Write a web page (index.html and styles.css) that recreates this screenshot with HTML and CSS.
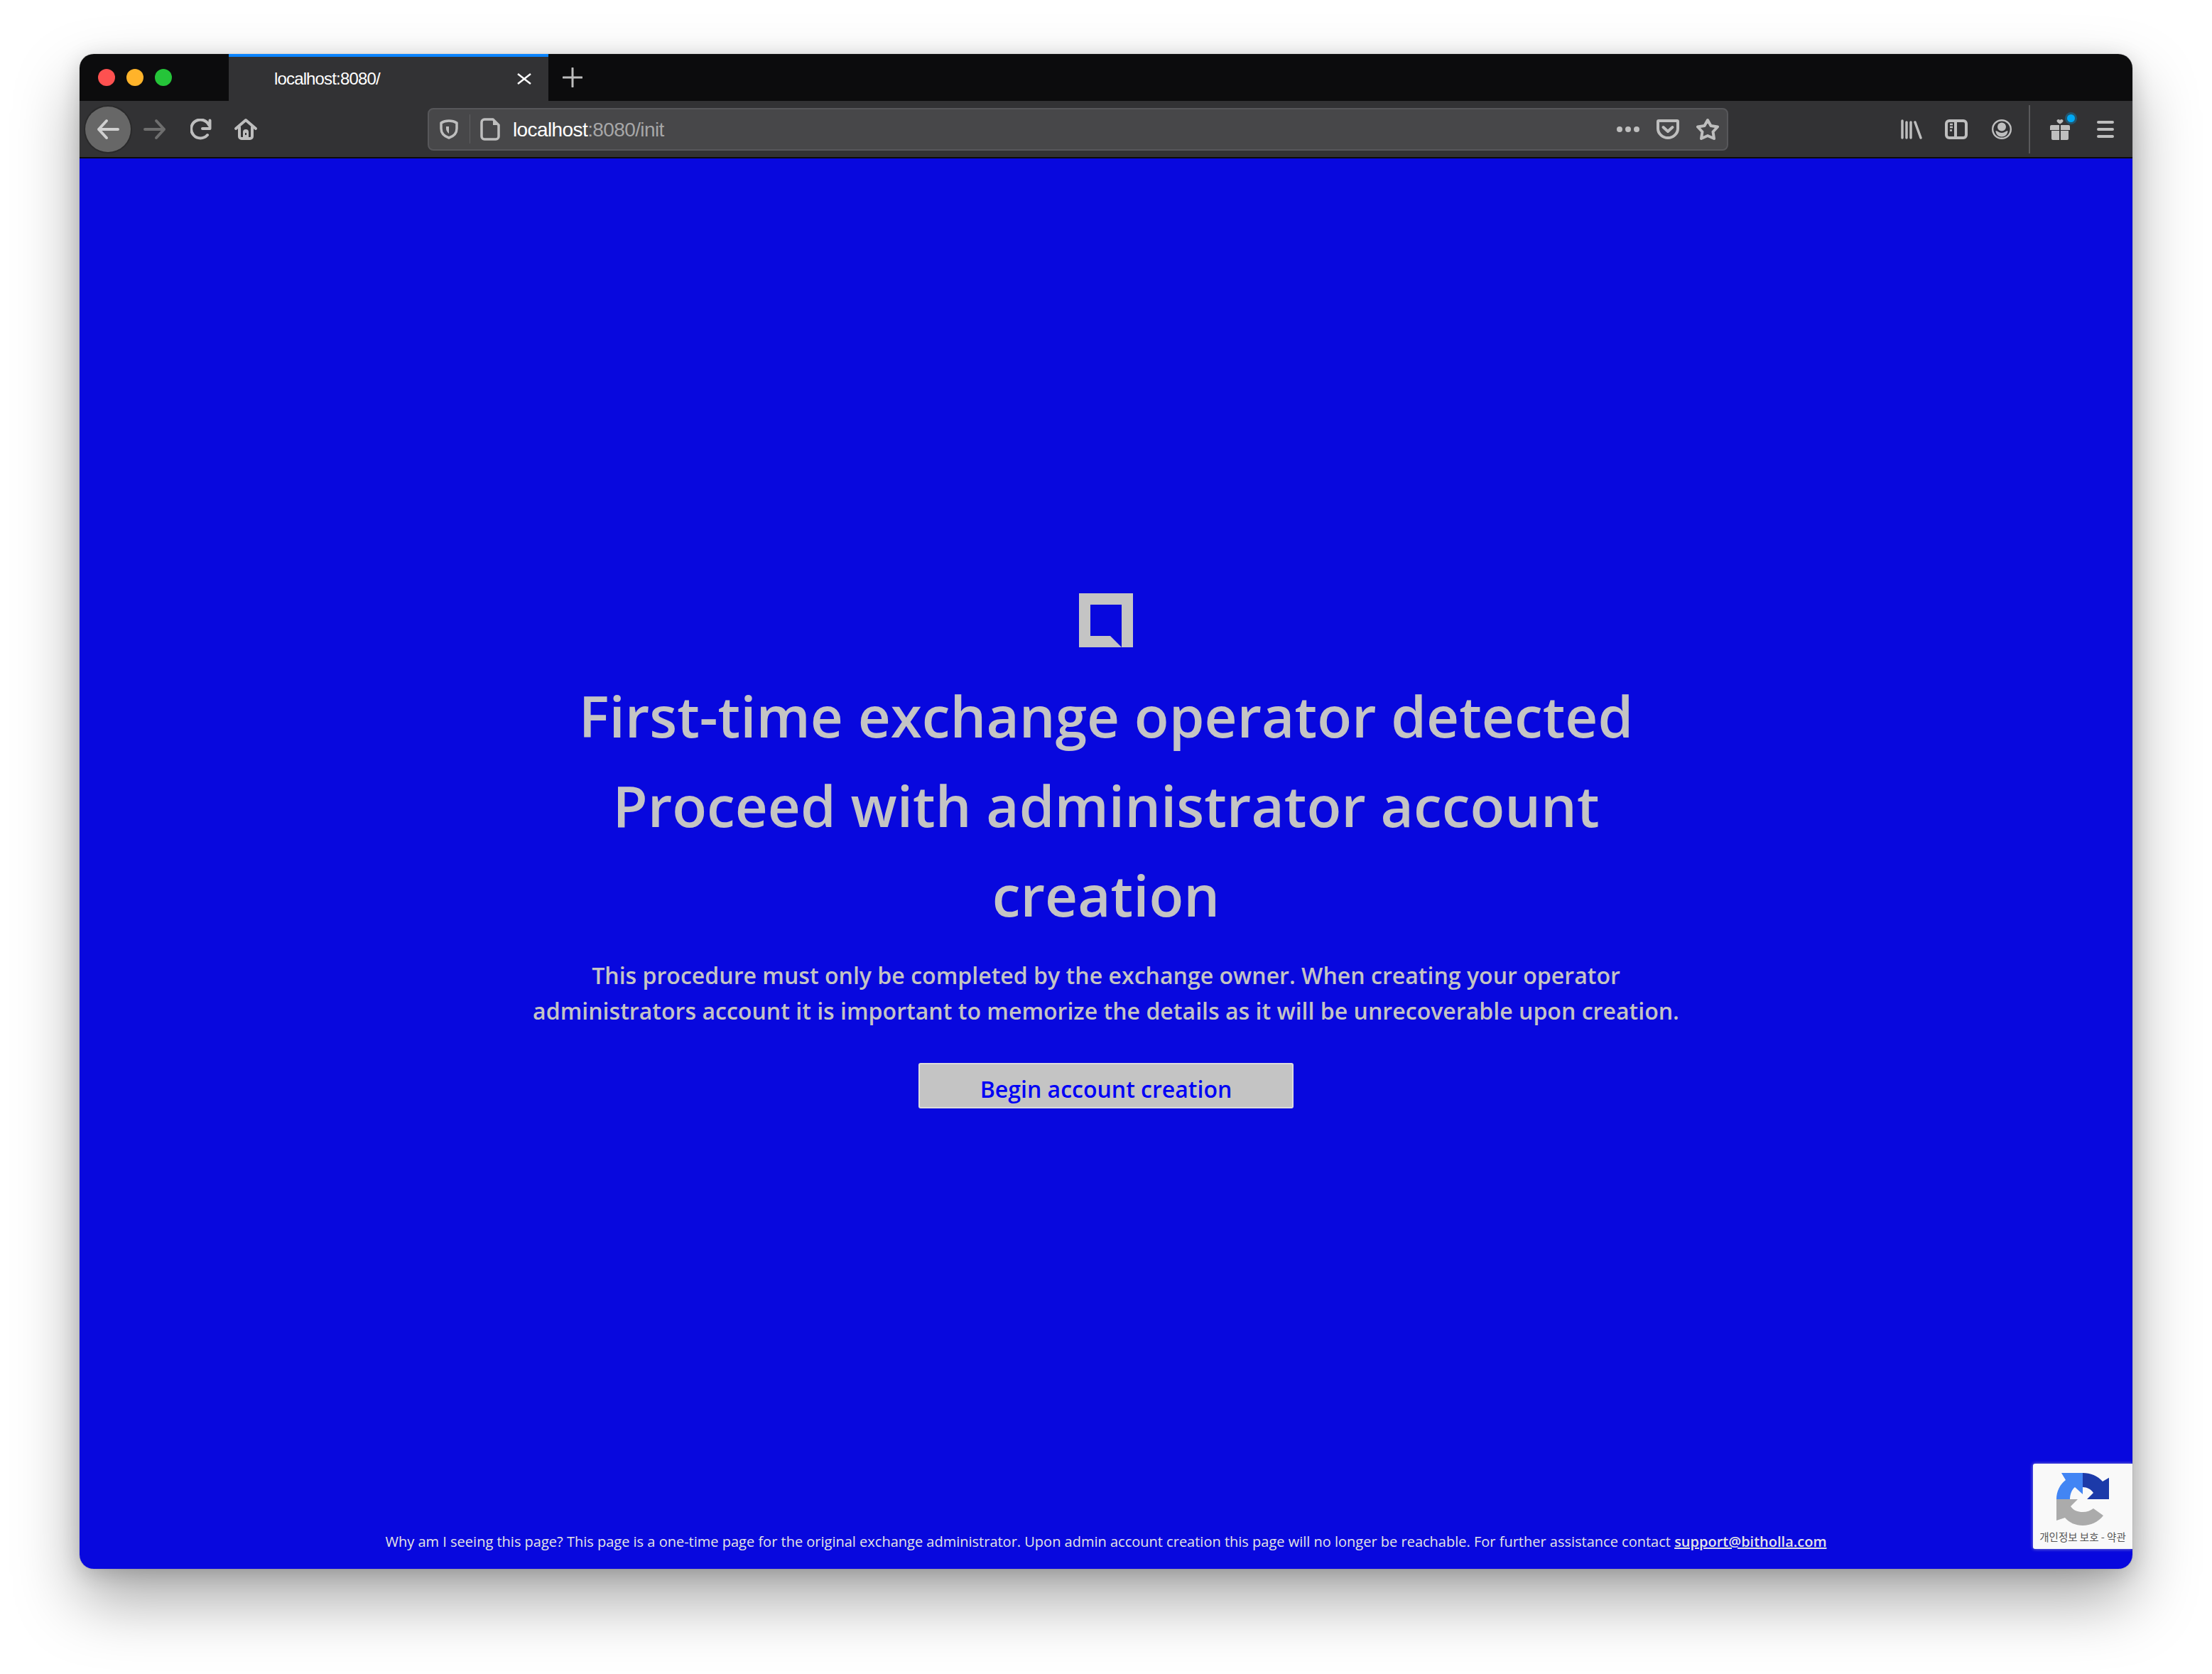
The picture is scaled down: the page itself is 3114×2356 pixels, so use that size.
FILE: index.html
```html
<!DOCTYPE html>
<html lang="en">

<head>
    <meta charset="UTF-8">
    <title>localhost:8080/</title>
    <link rel="stylesheet" href="styles.css">
</head>

<body>
    <div class="window">
        <div class="tabbar">
            <div class="lights">
                <span class="light red"></span>
                <span class="light orange"></span>
                <span class="light green"></span>
            </div>
            <div class="tab">
                <span class="tab-title">localhost:8080/</span>
                <svg class="tab-close" viewBox="0 0 20 16"><path d="M1 1 19 15M19 1 1 15"/></svg>
            </div>
            <svg class="tab-new" viewBox="0 0 28 28"><path d="M14 1v26M1 14h26"/></svg>
        </div>

        <div class="toolbar">
            <div class="back">
                <svg class="ico" viewBox="0 0 32 30"><path d="M30 15H3M14 3 3 15l11 12"/></svg>
            </div>
            <svg class="ico forward" viewBox="0 0 32 30"><path d="M2 15h27M18 3l11 12-11 12"/></svg>
            <svg class="ico reload" viewBox="0 0 30 30"><path d="M26 9A13 13 0 1 0 24 23M27.500 2.500V14H17"/></svg>
            <svg class="ico home" viewBox="0 0 34 31"><path d="M3 15 17 3l14 12M8 13v13a3 3 0 0 0 3 3h12a3 3 0 0 0 3-3V13"/><path class="fill" fill-rule="evenodd" d="M13 20a4 4 0 0 1 8 0v9h-8zM16 21v3h2v-3z"/></svg>

            <div class="urlbar">
                <svg class="ico shield" viewBox="0 0 26 28"><path d="M13 2c4 0 8 1 11 3v8c0 7-5 11-11 13C7 24 2 20 2 13V5c3-2 7-3 11-3z"/><path class="fill" d="M9 10h4v10c-2-1.500-4-4-4-7z"/></svg>
                <span class="url-sep"></span>
                <svg class="ico page" viewBox="0 0 28 32"><path d="M6 2h12l8 8v16a4 4 0 0 1-4 4H6a4 4 0 0 1-4-4V6a4 4 0 0 1 4-4z"/><path class="fill" d="M18 3l7 7h-7z"/></svg>
                <span class="url-text">localhost<span class="url-dim">:8080/init</span></span>
                <svg class="dots" viewBox="0 0 32 8"><circle cx="4" cy="4" r="4"/><circle cx="16" cy="4" r="4"/><circle cx="28" cy="4" r="4"/></svg>
                <svg class="ico pocket" viewBox="0 0 32 28"><path d="M3 2h26a1 1 0 0 1 1 1v10c0 7-6.500 13-14 13S2 20 2 13V3a1 1 0 0 1 1-1z"/><path d="m9.500 11 6.500 6 6.500-6"/></svg>
                <svg class="ico star" viewBox="0 0 32 31"><path d="M16 3l4.500 8 9.500 1.500-6.500 7L25 29l-9-4-9 4 1.500-9.500-6.500-7L11.500 11z"/></svg>
            </div>

            <div class="tools">
                <svg class="ico library" viewBox="0 0 30 28"><path d="M2 2v24M8 4v22M14 4v22M20 4l8 22"/></svg>
                <svg class="ico sidebar" viewBox="0 0 32 28"><rect x="2" y="2" width="28" height="24" rx="4"/><path d="M15 2v24"/><path class="thin" d="M7 7h4M7 11h4M7 15.500h3"/></svg>
                <svg class="ico account" viewBox="0 0 28 28"><circle class="ring" cx="14" cy="14" r="12.800"/><circle class="fill" cx="14" cy="10.500" r="6"/><path class="fill" d="M5.500 16c3 0 4 3 8.500 3s5.500-3 8.500-3c0 5-4 8.500-8.500 8.500S5.500 21 5.500 16z"/></svg>
                <span class="tool-sep"></span>
                <div class="gift">
                    <svg viewBox="0 0 28 30"><path d="M14 7.500C10.500 5.500 9.500 4.500 9.500 3c0-2 3.500-3 4.500-.5 1-2.500 4.500-1.500 4.500.5 0 1.500-1 2.500-4.500 4.500zM2 9h11v7H0v-5a2 2 0 0 1 2-2zM15 9h11a2 2 0 0 1 2 2v5H15zM2 17h11v13H4a2 2 0 0 1-2-2zM15 17h11v11a2 2 0 0 1-2 2h-9z"/></svg>
                    <span class="gift-dot"></span>
                </div>
                <svg class="ico burger" viewBox="0 0 24 24"><path d="M2 2h20M2 12h20M2 22h20"/></svg>
            </div>
        </div>

        <main class="page-area">
            <div class="hero">
                <svg class="logo" viewBox="0 0 76 76"><path fill-rule="evenodd" d="M0 0h76v76H0zM16 16v44h28l16 16V16z"/></svg>
                <h1>First-time exchange operator detected<br>Proceed with administrator account creation</h1>
                <p>This procedure must only be completed by the exchange owner. When creating your operator administrators account it is important to memorize the details as it will be unrecoverable upon creation.</p>
                <button class="begin">Begin account creation</button>
            </div>
            <footer class="note">Why am I seeing this page? This page is a one-time page for the original exchange administrator. Upon admin account creation this page will no longer be reachable. For further assistance contact <a href="#">support@bitholla.com</a></footer>

            <div class="recaptcha">
                <svg viewBox="0 0 74 74">
                    <path fill="#1c3aa9" d="M37 0c11 0 21 4 28 12l9-5.300V37H43l9-9c-3-5-9-8-15-8z"/>
                    <path fill="#4285f4" d="M7 0h30v30L26 20c-4 3-7 10-7 17H0C0 26 5 16 13 10z"/>
                    <path fill="#ababab" d="M0 37h30L20 47c4 6 10 8 17 8 6 0 11-2 15-5l14 10c-7 9-18 14-29 14-10 0-19-4-25-11L0 67z"/>
                </svg>
                <span class="recaptcha-text">개인정보 보호 - 약관</span>
            </div>
        </main>
    </div>
</body>

</html>
```

FILE: styles.css
```css
* {
    margin: 0;
    padding: 0;
    box-sizing: border-box;
}

html,
body {
    height: 100%;
}

body {
    background-color: #fff;
    padding: 76px 112px 148px;
    font-family: 'Open Sans', Arial, sans-serif;
}

.window {
    height: 100%;
    display: flex;
    flex-direction: column;
    border-radius: 20px;
    overflow: hidden;
    box-shadow: 0 44px 90px rgba(0, 0, 0, 0.34), 0 6px 30px rgba(0, 0, 0, 0.16), 0 0 1px rgba(0, 0, 0, 0.6);
}

/* browser chrome */
.tabbar {
    height: 66px;
    display: flex;
    align-items: stretch;
    background-color: #0c0c0d;
}

.lights {
    width: 210px;
    display: flex;
    align-items: center;
    gap: 16px;
    padding: 0 0 1px 26px;
}

.light {
    width: 24px;
    height: 24px;
    border-radius: 50%;
}

.red {
    background-color: #fe5150;
}

.orange {
    background-color: #ffb32a;
}

.green {
    background-color: #25c439;
}

.tab {
    width: 450px;
    display: flex;
    align-items: center;
    justify-content: space-between;
    padding: 0 24px 0 64px;
    background-color: #323234;
    border-top: 4px solid #0a84ff;
    color: #fff;
    font-family: 'Liberation Sans', Arial, sans-serif;
    font-size: 24px;
    letter-spacing: -0.85px;
}

.tab-close {
    width: 20px;
    height: 16px;
}

.tab-close path {
    fill: none;
    stroke: #fbfbfb;
    stroke-width: 2.5;
}

.tab-new {
    width: 28px;
    height: 28px;
    margin: 19px 0 0 20px;
}

.tab-new path {
    fill: none;
    stroke: #bdbdbd;
    stroke-width: 3;
    stroke-linecap: round;
}

.toolbar {
    height: 81px;
    display: flex;
    align-items: center;
    background-color: #323234;
    border-bottom: 2px solid #0c0c0d;
    padding-left: 8px;
}

.ico {
    fill: none;
    stroke: #bebebe;
    stroke-width: 3.5;
    stroke-linecap: round;
    stroke-linejoin: round;
}

.ico .fill {
    fill: #bebebe;
    stroke: none;
}

.back {
    width: 64px;
    height: 64px;
    display: flex;
    align-items: center;
    justify-content: center;
    flex-shrink: 0;
    border-radius: 50%;
    background-color: #676767;
    box-shadow: 0 0 0 2px #2a2a2b;
}

.back svg {
    width: 32px;
    height: 30px;
    stroke: #d0d0d0;
    stroke-width: 4;
}

.forward {
    width: 32px;
    height: 30px;
    margin-left: 18px;
    stroke: #6e6e6e;
    stroke-width: 4;
}

.reload {
    width: 30px;
    height: 30px;
    margin-left: 34px;
    stroke-width: 4;
}

.home {
    width: 34px;
    height: 31px;
    margin-left: 31px;
    stroke-width: 4;
}

.urlbar {
    width: 1831px;
    height: 60px;
    margin-left: 239px;
    display: flex;
    align-items: center;
    flex-shrink: 0;
    background-color: #474749;
    border: 2px solid #57575a;
    border-radius: 8px;
    padding: 0 11px 0 15px;
}

.shield {
    width: 26px;
    height: 28px;
}

.url-sep {
    width: 1px;
    height: 41px;
    margin-left: 16px;
    background-color: #5e5e60;
}

.page {
    width: 28px;
    height: 32px;
    margin-left: 14px;
}

.url-text {
    flex: 1;
    margin-left: 18px;
    padding-top: 2px;
    color: #fff;
    font-family: 'Liberation Sans', Arial, sans-serif;
    font-size: 28px;
    letter-spacing: -0.6px;
}

.url-dim {
    color: #a6a6a7;
}

.dots {
    width: 32px;
    height: 8px;
    fill: #bebebe;
}

.pocket {
    width: 32px;
    height: 28px;
    margin-left: 24px;
    stroke-width: 4;
}

.star {
    width: 32px;
    height: 31px;
    margin-left: 24px;
    stroke-width: 4;
}

.tools {
    flex: 1;
    display: flex;
    align-items: center;
    padding-left: 243px;
}

.library {
    width: 30px;
    height: 28px;
}

.sidebar {
    width: 32px;
    height: 28px;
    margin-left: 32px;
    stroke-width: 4;
}

.sidebar .thin {
    stroke-width: 2.5;
    stroke-linecap: butt;
}

.account {
    width: 28px;
    height: 28px;
    margin-left: 34px;
}

.account .ring {
    stroke-width: 2.4;
}

.tool-sep {
    width: 2px;
    height: 68px;
    margin-left: 24px;
    background-color: #59595b;
}

.gift {
    position: relative;
    width: 28px;
    height: 30px;
    margin-left: 28px;
}

.gift svg {
    display: block;
    fill: #bebebe;
}

.gift-dot {
    position: absolute;
    top: -6px;
    left: 24px;
    width: 11px;
    height: 11px;
    border-radius: 50%;
    background-color: #00a8f4;
    box-shadow: 0 0 0 3px rgba(0, 168, 244, 0.3);
}

.burger {
    width: 24px;
    height: 24px;
    margin-left: 38px;
    stroke-width: 4;
}

/* page */
.page-area {
    position: relative;
    flex: 1;
    display: flex;
    flex-direction: column;
    align-items: center;
    background-color: #0808de;
    color: #c4c4c4;
}

.hero {
    flex: 1;
    width: 1640px;
    display: flex;
    flex-direction: column;
    align-items: center;
    padding-top: 612px;
    text-align: center;
}

.logo {
    width: 76px;
    height: 76px;
    fill: #c4c4c4;
}

h1 {
    width: 1500px;
    margin-top: 33px;
    font-size: 80px;
    font-weight: 600;
    line-height: 126px;
}

p {
    margin-top: 26px;
    font-size: 32.100px;
    font-weight: 600;
    line-height: 50px;
}

.begin {
    width: 528px;
    height: 64px;
    margin-top: 48px;
    padding-top: 8px;
    background-color: #c4c4c4;
    border: 2px solid #dcdcdc;
    border-radius: 3px;
    color: #0000f5;
    font-family: 'Open Sans', Arial, sans-serif;
    font-size: 32px;
    font-weight: 600;
}

.note {
    padding-bottom: 24px;
    color: #e4e4e4;
    font-size: 20px;
    line-height: 28px;
}

.note a {
    color: #e4e4e4;
    font-weight: 600;
}

.recaptcha {
    position: absolute;
    top: 1837px;
    right: 0;
    width: 140px;
    height: 120px;
    display: flex;
    flex-direction: column;
    align-items: center;
    padding-top: 13px;
    background-color: #f9f9f9;
    border-radius: 3px 0 0 3px;
    box-shadow: 0 0 5px rgba(200, 200, 200, 0.7);
}

.recaptcha svg {
    width: 74px;
    height: 74px;
}

.recaptcha-text {
    margin-top: 7px;
    color: #555;
    font-family: 'Noto Sans CJK KR', sans-serif;
    font-size: 14.500px;
    line-height: 18px;
    white-space: nowrap;
}
```
